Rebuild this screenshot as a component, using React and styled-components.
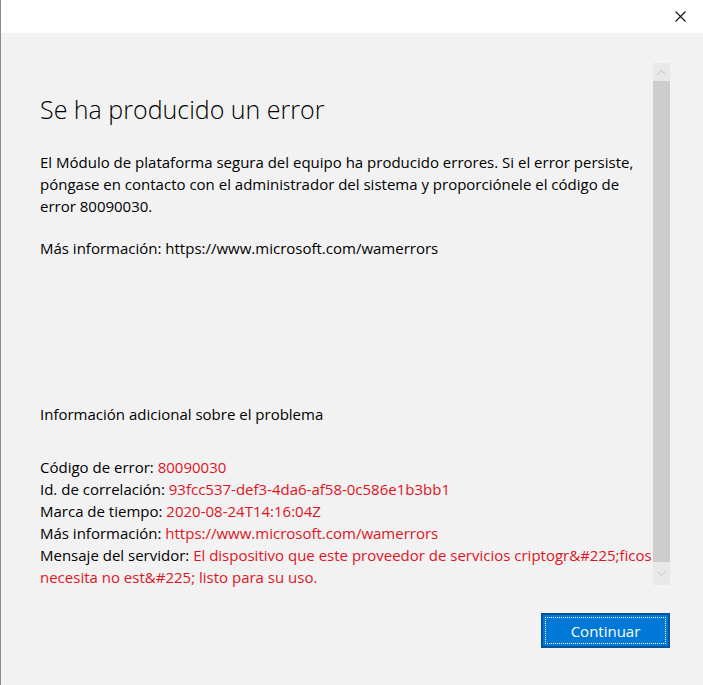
import React from "react";
import styled, { createGlobalStyle } from "styled-components";

const Global = createGlobalStyle`
    html, body {
        margin: 0;
        padding: 0;
        background: #f2f2f2;
    }
    body {
        font-family: "Open Sans", "Noto Sans", sans-serif;
        color: #000;
    }
`

const Window = styled.div`
    width: 703px;
    height: 685px;
    box-sizing: border-box;
    border-left: 1px solid #8a8a8a;
    background: #f2f2f2;
    display: flex;
    flex-direction: column;
    overflow: hidden;
`

const TitleBar = styled.div`
    height: 33px;
    background: #fff;
    display: flex;
    justify-content: flex-end;
    align-items: center;
    flex-shrink: 0;
`

const CloseButton = styled.button`
    width: 46px;
    height: 33px;
    border: none;
    background: transparent;
    display: flex;
    align-items: center;
    justify-content: center;
    padding: 0;
`

const ScrollRow = styled.div`
    display: flex;
    padding-top: 30px;
    height: 522px;
    padding-left: 39px;
    padding-right: 33px;
`

const Content = styled.div`
    flex: 1;
    min-width: 0;
    padding-top: 30px;
    font-size: 15px;
    line-height: 22px;
`

const Title = styled.h1`
    margin: 0 0 26px 0;
    font-size: 25px;
    font-weight: 300;
    line-height: 32px;
`

const Para = styled.p`
    margin: 0 0 ${(p) => p.$gap || 0}px 0;
    white-space: ${(p) => (p.$nowrap ? "nowrap" : "normal")};
`

const Red = styled.span`
    color: #e0141e;
`

const ScrollBar = styled.div`
    width: 17px;
    flex-shrink: 0;
    display: flex;
    flex-direction: column;
    background: #f0f0f0;
`

const Arrow = styled.div`
    height: ${(p) => p.$h}px;
    background: #e8e8e8;
    display: flex;
    align-items: center;
    justify-content: center;
`

const Thumb = styled.div`
    flex: 1;
    background: #cdcdcd;
`

const Footer = styled.div`
    display: flex;
    justify-content: flex-end;
    padding-right: 33px;
    margin-top: 28px;
`

const Button = styled.button`
    width: 129px;
    height: 35px;
    box-sizing: border-box;
    background: #0078d7;
    border: 2px solid #00559a;
    color: #fff;
    font-family: "Open Sans", "Noto Sans", sans-serif;
    font-size: 15px;
    padding: 0;
    position: relative;
    &::after {
        content: "";
        position: absolute;
        inset: 2px;
        border: 1px dotted #fff;
    }
`

export default function App() {
    return (
        <>
            <Global />
            <Window>
                <TitleBar>
                    <CloseButton aria-label="Cerrar">
                        <svg width="11" height="11" viewBox="0 0 11 11">
                            <path d="M0.5 0.5 L10.5 10.5 M10.5 0.5 L0.5 10.5" stroke="#111" strokeWidth="1.1" fill="none" />
                        </svg>
                    </CloseButton>
                </TitleBar>
                <ScrollRow>
                    <Content>
                        <Title>Se ha producido un error</Title>
                        <Para $gap={20}>
                            El Módulo de plataforma segura del equipo ha producido errores. Si el error persiste,<br />
                            póngase en contacto con el administrador del sistema y proporciónele el código de<br />
                            error 80090030.
                        </Para>
                        <Para $gap={144}>Más información: https://www.microsoft.com/wamerrors</Para>
                        <Para $gap={31}>Información adicional sobre el problema</Para>
                        <Para>Código de error: <Red>80090030</Red></Para>
                        <Para>Id. de correlación: <Red>93fcc537-def3-4da6-af58-0c586e1b3bb1</Red></Para>
                        <Para>Marca de tiempo: <Red>2020-08-24T14:16:04Z</Red></Para>
                        <Para>Más información: <Red>https://www.microsoft.com/wamerrors</Red></Para>
                        <Para $nowrap>
                            Mensaje del servidor: <Red>El dispositivo que este proveedor de servicios criptogr&amp;#225;ficos</Red>
                        </Para>
                        <Para>
                            <Red>necesita no est&amp;#225; listo para su uso.</Red>
                        </Para>
                    </Content>
                    <ScrollBar>
                        <Arrow $h={18}>
                            <svg width="9" height="5" viewBox="0 0 9 5">
                                <path d="M0.5 4.5 L4.5 0.5 L8.5 4.5" stroke="#c4c4c4" fill="none" />
                            </svg>
                        </Arrow>
                        <Thumb />
                        <Arrow $h={23}>
                            <svg width="9" height="5" viewBox="0 0 9 5">
                                <path d="M0.5 0.5 L4.5 4.5 L8.5 0.5" stroke="#c4c4c4" fill="none" />
                            </svg>
                        </Arrow>
                    </ScrollBar>
                </ScrollRow>
                <Footer>
                    <Button>Continuar</Button>
                </Footer>
            </Window>
        </>
    );
}
